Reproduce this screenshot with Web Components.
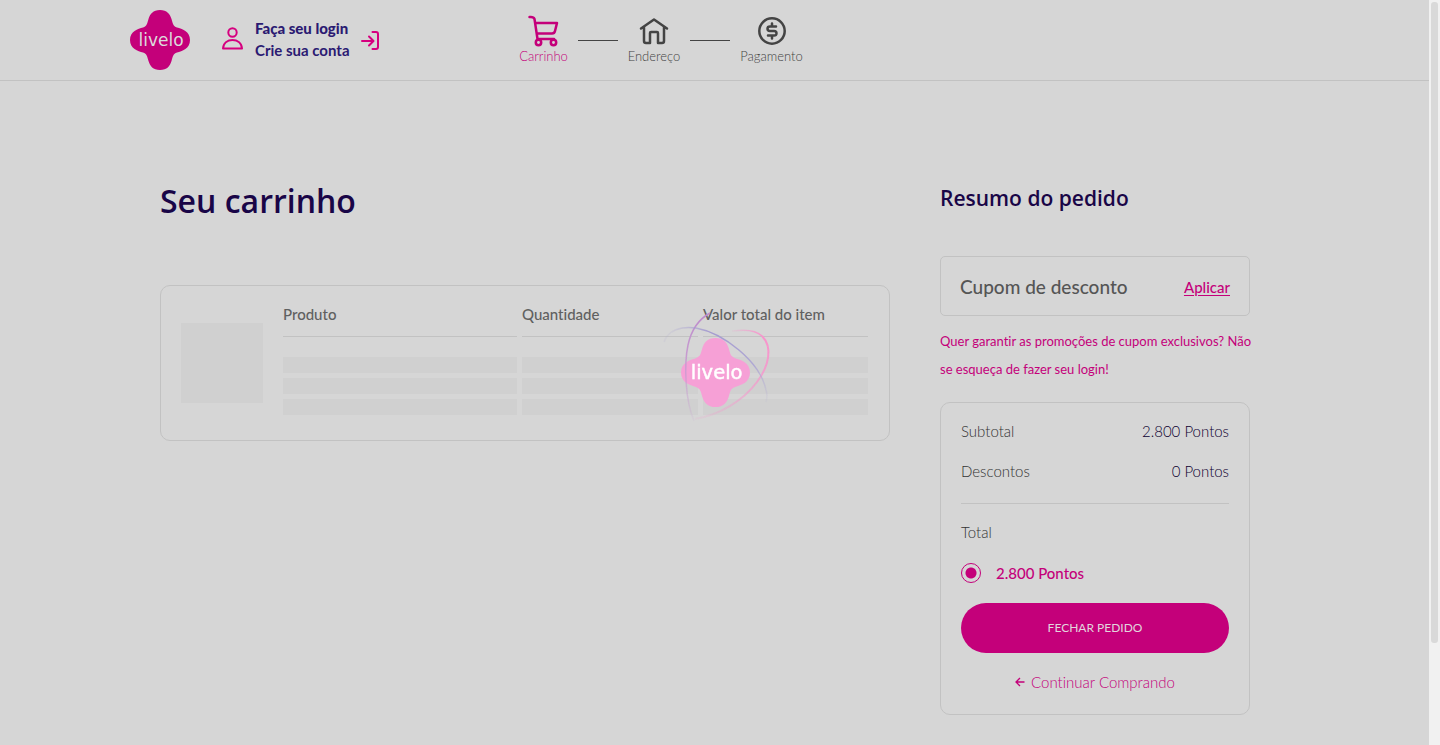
<!DOCTYPE html>
<html lang="pt-BR">
<head>
<meta charset="utf-8">
<meta name="viewport" content="width=device-width, initial-scale=1">
<title>Seu carrinho | Livelo</title>
<style>
  :root {
    --pink: #c4007a;
    --navy: #190547;
    --indigo: #2b1a72;
    --ink: #444;
    --line: #c2c2c2;
    --page: #d6d6d6;
    --bone: #d0d0d0;
  }
  * { box-sizing: border-box; }
  body {
    margin: 0;
    min-height: 100vh;
    display: flex;
    background: var(--page);
    color: var(--ink);
    font-family: Lato, "Open Sans", sans-serif;
    font-size: 15px;
    font-variant-ligatures: none;
  }
</style>
</head>
<body>
<cart-page></cart-page>
<page-scrollbar></page-scrollbar>

<script>
const define = (name, html) => {
  const template = document.createElement('template');
  template.innerHTML = '<style>*{box-sizing:border-box}</style>' + html;
  customElements.define(name, class extends HTMLElement {
    constructor() {
      super();
      this.attachShadow({ mode: 'open' }).append(template.content.cloneNode(true));
    }
  });
};

define('livelo-logo', `
  <style>
    :host { display: block; width: 60px; height: 60px; color: var(--pink); }
    svg { display: block; width: 100%; height: 100%; }
    text { font: 17px "DejaVu Sans", sans-serif; fill: var(--word, #dcdcdc); stroke: var(--word, #dcdcdc); stroke-width: var(--word-weight, 0); }
  </style>
  <svg viewBox="0 0 60 60" role="img" aria-label="Livelo">
    <path fill="currentColor" d="M30 0C37 0 40 4 41.500 9C43 14 43 16 47 17.500C52 19 60 21 60 30C60 39 52 41 47 42.500C43 44 43 46 41.500 51C40 56 37 60 30 60C23 60 20 56 18.500 51C17 46 17 44 13 42.500C8 41 0 39 0 30C0 21 8 19 13 17.500C17 16 17 14 18.500 9C20 4 23 0 30 0Z"/>
    <text x="31" y="36" text-anchor="middle">livelo</text>
  </svg>`);

define('cart-step', `
  <style>
    :host { display: flex; flex-direction: column; align-items: center; color: var(--ink); font-size: 13px; line-height: 18px; font-weight: 300; }
    :host([active]) { color: var(--pink); }
    ::slotted(svg) { display: block; width: 32px; height: 32px; fill: none; stroke: currentColor; stroke-width: 2.5; stroke-linecap: round; stroke-linejoin: round; }
  </style>
  <slot name="icon"></slot><span><slot></slot></span>`);

define('cart-header', `
  <style>
    :host { display: block; border-bottom: 1px solid var(--line); }
    .bar { max-width: 1169px; height: 80px; margin: 0 auto; display: flex; align-items: center; }
    .login { display: flex; align-items: center; gap: 10px; margin-left: 32px; color: var(--indigo); }
    .login svg { display: block; fill: none; stroke: #d6007f; stroke-width: 2; stroke-linecap: round; stroke-linejoin: round; }
    .links { display: flex; flex-direction: column; width: 97px; padding: 0 0 2px 1px; font-size: 15px; line-height: 22px; white-space: nowrap; }
    a { color: inherit; text-decoration: none; font-weight: 700; }
    .first { font-weight: 900; }
    nav { display: flex; align-items: center; gap: 10px; margin-left: 138px; }
    hr { width: 40px; border: 0; border-top: 1px solid var(--ink); margin: 0; }
    .cart { width: 49px; } .home { width: 52px; } .pay { width: 63px; }
  </style>
  <header class="bar">
    <livelo-logo></livelo-logo>
    <div class="login">
      <svg width="22" height="28" viewBox="0 0 22 28"><circle cx="10.500" cy="6.500" r="4.200"/><path d="M1 22.500C1.500 16.500 6 14 10.500 14S19.500 16.500 20 22.500Z"/></svg>
      <div class="links"><a class="first" href="#login">Faça seu login</a><a href="#conta">Crie sua conta</a></div>
      <svg width="20" height="20" viewBox="0 0 20 20"><path d="M1 11H12M8 6.500L12.500 11L8 15.500M11.500 2H15Q17 2 17 4V17Q17 19 15 19H11.500"/></svg>
    </div>
    <nav aria-label="Etapas">
      <cart-step class="cart" active>
        <svg slot="icon" viewBox="0 0 32 32"><path d="M1.500 2Q5.500 1.500 6.500 4L9.500 24M7.500 8H29L27 16Q26.500 18.500 24 18.500H9M9.500 24H26"/><circle cx="10.500" cy="27.500" r="2.700"/><circle cx="25.500" cy="27.500" r="2.700"/></svg>
        Carrinho</cart-step>
      <hr>
      <cart-step class="home">
        <svg slot="icon" viewBox="0 0 32 32"><path d="M3 13.500L16 4.500L29 13.500M6 12V26Q6 28 8 28H12V18Q12 17 13 17H19Q20 17 20 18V28H24Q26 28 26 26V12"/></svg>
        Endereço</cart-step>
      <hr>
      <cart-step class="pay">
        <svg slot="icon" viewBox="0 0 32 32"><circle cx="16" cy="16" r="12.700"/><path d="M20 11.500H14Q11.500 11.500 11.500 13.700T14 16H18Q20.500 16 20.500 18.300T18 20.500H12M16 8.500V11.500M16 20.500V23.500"/></svg>
        Pagamento</cart-step>
    </nav>
  </header>`);

define('cart-table', `
  <style>
    :host { display: flex; gap: 15px; padding: 17px 16px 20px 20px; border: 1px solid var(--line); border-radius: 10px; color: #606060; }
    .photo { flex: none; width: 82px; height: 80px; margin-top: 20px; background: var(--bone); }
    table { flex: 1; min-width: 0; table-layout: fixed; border-collapse: separate; border-spacing: 5px; margin-top: -5px; }
    th { height: 34px; padding: 1px 0 12px; border-bottom: 1px solid var(--line); text-align: left; font-size: 15px; line-height: 20px; font-weight: 500; white-space: nowrap; }
    td { padding: 0; }
    tbody tr:first-child td { padding-top: 15px; }
    i { display: block; height: 16px; background: var(--bone); }
    .product { width: 234px; } .amount { width: 176px; }
  </style>
  <div class="photo"></div>
  <table>
    <colgroup><col class="product"><col class="amount"><col></colgroup>
    <thead><tr><th>Produto</th><th>Quantidade</th><th>Valor total do item</th></tr></thead>
    <tbody>
      <tr><td><i></i></td><td><i></i></td><td><i></i></td></tr>
      <tr><td><i></i></td><td><i></i></td><td><i></i></td></tr>
      <tr><td><i></i></td><td><i></i></td><td><i></i></td></tr>
    </tbody>
  </table>`);

define('coupon-box', `
  <style>
    :host { display: block; }
    .box { display: flex; align-items: center; justify-content: space-between; height: 60px; padding: 2px 19px 0; border: 1px solid var(--line); border-radius: 5px; }
    span { font-size: 19px; line-height: 24px; font-weight: 500; color: #555; }
    a { color: var(--pink); font-size: 15px; line-height: 20px; font-weight: 500; text-underline-offset: 2px; }
    p { margin: 11px -10px 0 0; color: var(--pink); font-size: 13px; line-height: 28px; font-weight: 400; }
  </style>
  <div class="box"><span>Cupom de desconto</span><a href="#cupom">Aplicar</a></div>
  <p>Quer garantir as promoções de cupom exclusivos? Não se esqueça de fazer seu login!</p>`);

define('order-summary', `
  <style>
    :host { display: block; padding: 18px 20px 22px; border: 1px solid var(--line); border-radius: 10px; font-size: 15px; line-height: 20px; font-weight: 300; color: #333; }
    dl { margin: 0; padding-bottom: 22px; border-bottom: 1px solid var(--line); display: grid; gap: 20px; }
    dl div { display: flex; justify-content: space-between; }
    dd { margin: 0; color: #0d0030; }
    p { margin: 18px 0 21px; }
    label { display: flex; align-items: center; gap: 15px; color: var(--pink); font-size: 15px; font-weight: 500; }
    input { appearance: none; width: 20px; height: 20px; margin: 0; border: 1px solid var(--pink); border-radius: 50%; background: radial-gradient(circle, var(--pink) 5px, transparent 6px); }
    button { display: block; width: 100%; height: 50px; margin: 20px 0 19px; border: 0; border-radius: 25px; background: var(--pink); color: #e2d5dd; font: 12px/20px Lato, sans-serif; }
    a { display: flex; align-items: center; justify-content: center; gap: 6px; color: var(--pink); text-decoration: none; }
    svg { fill: none; stroke: currentColor; stroke-width: 1.3; }
  </style>
  <dl>
    <div><dt>Subtotal</dt><dd>2.800 Pontos</dd></div>
    <div><dt>Descontos</dt><dd>0 Pontos</dd></div>
  </dl>
  <p>Total</p>
  <label for="pontos"><input id="pontos" type="radio" name="total" checked>2.800 Pontos</label>
  <button type="button">FECHAR PEDIDO</button>
  <a href="#continuar"><svg width="10" height="10" viewBox="0 0 10 10"><path d="M9.500 5H1M5 1L1 5L5 9"/></svg>Continuar Comprando</a>`);

define('loading-mark', `
  <style>
    :host { position: fixed; inset: 0 10px 0 0; display: grid; place-items: center; pointer-events: none; }
    svg, livelo-logo { grid-area: 1 / 1; }
    livelo-logo { width: 69px; height: 69px; color: #f6a0d6; --word: #fff; --word-weight: 0.4px; }
    svg { width: 140px; height: 140px; fill: none; }
  </style>
  <livelo-logo></livelo-logo>
  <svg viewBox="-5 3 140 140" aria-hidden="true">
    <defs>
      <linearGradient id="pink" gradientUnits="userSpaceOnUse" x1="119" y1="45" x2="45" y2="118"><stop offset="0" stop-color="#f795cc"/><stop offset="1" stop-color="#f795cc" stop-opacity=".1"/></linearGradient>
      <linearGradient id="head" gradientUnits="userSpaceOnUse" x1="82" y1="30" x2="112" y2="36"><stop offset="0" stop-color="#f795cc" stop-opacity=".1"/><stop offset="1" stop-color="#f795cc"/></linearGradient>
      <linearGradient id="violet" gradientUnits="userSpaceOnUse" x1="50" y1="15" x2="44" y2="121"><stop offset="0" stop-color="#bd8acb"/><stop offset=".4" stop-color="#c79bd0"/><stop offset="1" stop-color="#c79bd0" stop-opacity=".1"/></linearGradient>
      <linearGradient id="blue" gradientUnits="userSpaceOnUse" x1="14" y1="40" x2="117" y2="100"><stop offset="0" stop-color="#a49bd0" stop-opacity=".1"/><stop offset=".3" stop-color="#a49bd0"/><stop offset=".75" stop-color="#aea6d3"/><stop offset="1" stop-color="#aea6d3" stop-opacity=".1"/></linearGradient>
    </defs>
    <path stroke="url(#head)" stroke-width="1.500" d="M82 31C96 29 106 30 112 36"/>
    <path stroke="url(#pink)" stroke-width="2" d="M112 36C123 47 119 66 107 82C93 101 69 115 45 119"/>
    <path stroke="url(#violet)" stroke-width="1.500" d="M60 13C49 19 41 31 38 45C34 64 35 100 44 121"/>
    <path stroke="url(#blue)" stroke-width="1.500" d="M14 42C18 30 31 26 46 28C73 33 110 61 116 90Q118 96 116 102"/>
  </svg>`);

define('cart-page', `
  <style>
    :host { flex: 1; min-width: 0; display: block; }
    main { max-width: 1169px; margin: 0 auto; padding: 100px 49px 30px 30px; display: grid; grid-template-columns: minmax(0, 1fr) 310px; gap: 50px; align-items: start; }
    h1, h2 { margin: 0; color: var(--navy); font-family: "Open Sans", sans-serif; font-weight: 600; white-space: nowrap; }
    h1 { font-size: 32px; line-height: 40px; margin-bottom: 64px; }
    h2 { font-size: 21px; line-height: 34px; margin-bottom: 41px; }
    order-summary { margin-top: 19px; }
  </style>
  <cart-header></cart-header>
  <main>
    <section><h1>Seu carrinho</h1><cart-table></cart-table></section>
    <aside><h2>Resumo do pedido</h2><coupon-box></coupon-box><order-summary></order-summary></aside>
  </main>
  <loading-mark></loading-mark>`);

define('page-scrollbar', `
  <style>
    :host { flex: none; width: 11px; padding: 2px; background: #f1f1f1; }
    div { width: 7px; height: 86vh; border-radius: 3px; background: #d9d9d9; }
  </style>
  <div></div>`);
</script>
</body>
</html>
